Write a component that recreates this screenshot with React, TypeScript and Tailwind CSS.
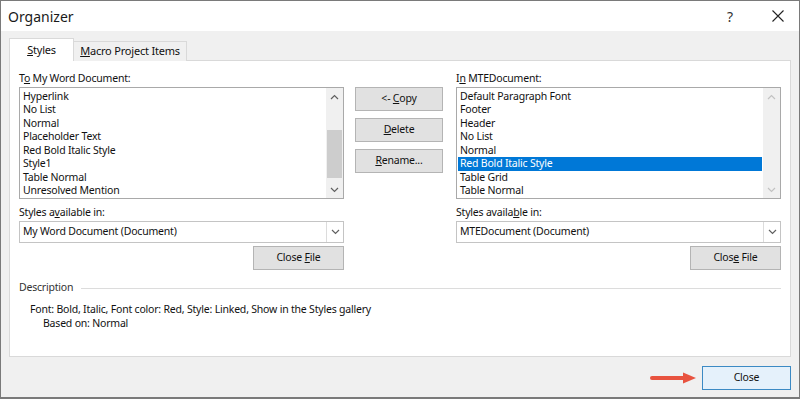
import React from "react"

const leftItems = [
  "Hyperlink",
  "No List",
  "Normal",
  "Placeholder Text",
  "Red Bold Italic Style",
  "Style1",
  "Table Normal",
  "Unresolved Mention"
]

const rightItems = [
  "Default Paragraph Font",
  "Footer",
  "Header",
  "No List",
  "Normal",
  "Red Bold Italic Style",
  "Table Grid",
  "Table Normal"
]

function Chevron({ up, light }: { up?: boolean; light?: boolean }) {
  return (
    <svg width="9" height="6" viewBox="0 0 9 6">
      <path
        d={up ? "M1 5 L4.5 1.5 L8 5" : "M1 1 L4.5 4.5 L8 1"}
        fill="none"
        stroke={light ? "#c2c2c2" : "#606060"}
        strokeWidth="1.2"
      />
    </svg>
  )
}

function ListBox({ items, selected, disabledScroll }: { items: string[]; selected?: number; disabledScroll?: boolean }) {
  return (
    <div className="h-[112px] border border-[#a9a9a9] bg-white flex">
      <div className="flex-1 pt-[1.5px] pl-[1px] pr-[1px]">
        {items.map((item, i) => (
          <div
            key={item + i}
            className={
              "h-[13.5px] leading-[13.5px] pl-[2px] whitespace-nowrap " +
              (i === selected ? "bg-[#0078d7] text-white" : "text-[#111]")
            }
          >
            {item}
          </div>
        ))}
      </div>
      <div className="w-[17px] bg-[#f0f0f0] flex flex-col items-center">
        <div className="h-[17px] flex items-center justify-center">
          <Chevron up light={disabledScroll} />
        </div>
        <div className="flex-1 w-full flex flex-col">
          {!disabledScroll && (
            <div className="mt-[25px] h-[48px] mx-[1px] bg-[#cdcdcd]"></div>
          )}
        </div>
        <div className="h-[17px] flex items-center justify-center">
          <Chevron light={disabledScroll} />
        </div>
      </div>
    </div>
  )
}

function Combo({ text }: { text: string }) {
  return (
    <div className="h-[22px] border border-[#c4c4c4] bg-white flex">
      <div className="flex-1 pl-[3px] leading-[19px] text-[#111]">{text}</div>
      <div className="w-[17px] border-l border-[#dcdcdc] flex items-center justify-center">
        <Chevron />
      </div>
    </div>
  )
}

function Button({ children, className }: { children: React.ReactNode; className?: string }) {
  return (
    <div
      className={
        "h-[24px] border border-[#b4b4b4] bg-[#e1e1e1] flex items-center justify-center text-[#111] " +
        (className || "")
      }
    >
      <span className="whitespace-pre">{children}</span>
    </div>
  )
}

export default function App() {
  return (
    <div
      className="w-[800px] h-[399px] bg-[#f0f0f0] border border-[#7a7a7a] border-b-2 flex flex-col text-[10.5px] tracking-[-0.2px] overflow-hidden"
      style={{ fontFamily: '"Noto Sans", "Open Sans", sans-serif' }}
    >
      {/* TITLE BAR */}
      <div className="h-[30px] bg-white flex items-center pl-[7px] shrink-0 tracking-normal">
        <div className="text-[14px] text-[#1a1a1a]">Organizer</div>
        <div className="ml-auto text-[14px] text-[#333] w-[20px] text-center mr-[32px]">?</div>
        <div className="mr-[15px] flex items-center">
          <svg width="12" height="12" viewBox="0 0 12 12">
            <path d="M0.5 0.5 L11.5 11.5 M11.5 0.5 L0.5 11.5" stroke="#222" strokeWidth="1.1" />
          </svg>
        </div>
      </div>

      {/* BODY */}
      <div className="flex-1 flex flex-col px-[8px] pt-[7px]">

        {/* TABS */}
        <div className="flex items-end h-[23px] relative z-10 text-[11px]">
          <div className="w-[65px] h-[23px] bg-white border border-[#d9d9d9] border-b-0 flex items-center justify-center text-[#111] whitespace-nowrap">
            <span><u>S</u>tyles</span>
          </div>
          <div className="w-[113px] h-[20px] bg-[#f0f0f0] border border-[#d9d9d9] border-l-0 border-b-0 flex items-center justify-center text-[#111] whitespace-nowrap">
            <span><u>M</u>acro Project Items</span>
          </div>
        </div>

        {/* PANEL */}
        <div className="h-[297px] -mt-[1px] bg-white border border-[#d9d9d9] px-[9px] pt-[9px] text-[#111]">

          <div className="flex">
            {/* LEFT */}
            <div className="w-[325px]">
              <div className="h-[17px] leading-[16px]">T<u>o</u> My Word Document:</div>
              <ListBox items={leftItems} />
              <div className="h-[21px] leading-[24px] mt-[1px]">Styles a<u>v</u>ailable in:</div>
              <Combo text="My Word Document (Document)" />
              <div className="flex justify-end mt-[3px]">
                <Button className="w-[91px]">Close <u>F</u>ile</Button>
              </div>
            </div>

            {/* MIDDLE */}
            <div className="w-[88px] ml-[11px] pt-[17px] flex flex-col gap-[7px]">
              <Button>&lt;- <u>C</u>opy</Button>
              <Button><u>D</u>elete</Button>
              <Button><u>R</u>ename...</Button>
            </div>

            {/* RIGHT */}
            <div className="w-[325px] ml-[13px]">
              <div className="h-[17px] leading-[16px]">I<u>n</u> MTEDocument:</div>
              <ListBox items={rightItems} selected={5} disabledScroll />
              <div className="h-[21px] leading-[24px] mt-[1px]">Styles availa<u>b</u>le in:</div>
              <Combo text="MTEDocument (Document)" />
              <div className="flex justify-end mt-[3px]">
                <Button className="w-[91px]">Clos<u>e</u> File</Button>
              </div>
            </div>
          </div>

          {/* DESCRIPTION */}
          <div className="flex items-center mt-[10px] h-[16px]">
            <span className="text-[#333]">Description</span>
            <div className="flex-1 h-px bg-[#dcdcdc] ml-[8px]"></div>
          </div>
          <div className="mt-[6px] pl-[11px] leading-[14px]">
            <div>Font: Bold, Italic, Font color: Red, Style: Linked, Show in the Styles gallery</div>
            <div className="pl-[13px]">Based on: Normal</div>
          </div>
        </div>

        {/* FOOTER */}
        <div className="flex items-center justify-end mt-[9px]">
          <svg width="48" height="12" viewBox="0 0 48 12" className="mr-[4px]">
            <path d="M2 6 L36 6" stroke="#e8533f" strokeWidth="4" strokeLinecap="round" />
            <path d="M33 0.5 L46 6 L33 11.5 Z" fill="#e8533f" />
          </svg>
          <div className="w-[89px] h-[24px] border border-[#3c8ac4] bg-[#e5f1fb] flex items-center justify-center text-[#111]">
            Close
          </div>
        </div>
      </div>
    </div>
  )
}
